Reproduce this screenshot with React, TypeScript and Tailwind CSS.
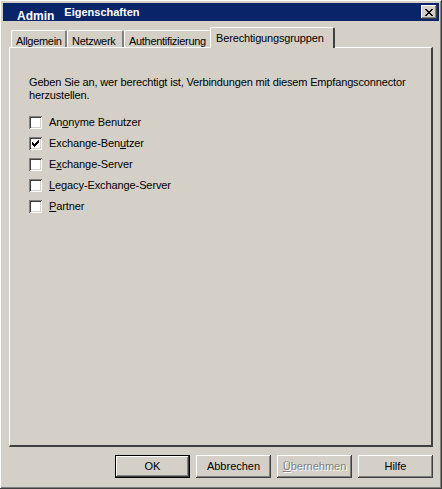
import React from "react";

const font = { fontFamily: '"Liberation Sans", Arial, sans-serif' };

// classic 3D borders
const raised =
  "shadow-[inset_-1px_-1px_#404040,inset_1px_1px_#ffffff,inset_-2px_-2px_#808080,inset_2px_2px_#d4d0c8]";

function Checkbox({ checked, children }: { checked?: boolean; children: React.ReactNode }) {
  return (
    <div className="flex items-center h-[13px] gap-[7px]">
      <div className="w-[13px] h-[13px] bg-white shadow-[inset_1px_1px_#808080,inset_-1px_-1px_#ffffff,inset_2px_2px_#404040,inset_-2px_-2px_#d4d0c8] flex items-center justify-center">
        {checked && (
          <svg width="7" height="7" viewBox="0 0 7 7">
            <path d="M0 2h1v1h1v1h1v-1h1v-1h1v-1h1v-1h1v3h-1v1h-1v1h-1v1h-1v1h-1v-1h-1v-1h-1v-1h-1z" fill="#000" />
          </svg>
        )}
      </div>
      <span className="text-[11px] text-black leading-[13px] tracking-[-0.1px]">{children}</span>
    </div>
  );
}

function Tab({ label, w, active }: { label: string; w: string; active?: boolean }) {
  if (active) {
    return (
      <div
        className={`${w} h-[21px] -mx-[2px] relative z-10 bg-[#d4d0c8] border-l border-t border-white border-r-2 border-r-[#404040] rounded-t-[2px] pl-[5px] pt-[2px] text-[11px] text-black whitespace-nowrap tracking-[-0.15px]`}
      >
        {label}
      </div>
    );
  }
  return (
    <div
      className={`${w} h-[18px] mt-[3px] bg-[#d4d0c8] border-l border-t border-white border-r-2 border-r-[#808080] rounded-t-[2px] pl-[4px] pt-[2px] text-[11px] text-black whitespace-nowrap tracking-[-0.3px]`}
    >
      {label}
    </div>
  );
}

function Button({ children, def, disabled }: { children: React.ReactNode; def?: boolean; disabled?: boolean }) {
  return (
    <div className={`w-[75px] h-[23px] ${def ? "border border-black" : ""}`}>
      <div
        className={`w-full h-full bg-[#d4d0c8] ${raised} flex items-center justify-center text-[11px] ${
          disabled ? "text-[#808080] [text-shadow:1px_1px_#ffffff]" : "text-black"
        }`}
      >
        {children}
      </div>
    </div>
  );
}

export default function App() {
  return (
    <div
      style={font}
      className={`w-[442px] h-[489px] bg-[#d4d0c8] p-[3px] flex flex-col ${raised}`}
    >
      {/* title bar */}
      <div className="h-[18px] bg-[#0a246a] flex items-start pl-[14px] pr-[2px] text-white font-bold">
        <span className="text-[12px] pt-[4px]">Admin</span>
        <span className="text-[11px] ml-[10px] pt-[1px]">Eigenschaften</span>
        <div className="ml-auto mt-[2px] w-[16px] h-[14px] bg-[#d4d0c8] shadow-[inset_-1px_-1px_#404040,inset_1px_1px_#ffffff,inset_-2px_-2px_#808080] flex items-center justify-center">
          <svg width="8" height="7" viewBox="0 0 8 7">
            <path d="M0 0h2v1h1v1h2v-1h1v-1h2v1h-1v1h-1v1h-1v1h1v1h1v1h1v1h-2v-1h-1v-1h-2v1h-1v1h-2v-1h1v-1h1v-1h1v-1h-1v-1h-1v-1h-1z" fill="#000" />
          </svg>
        </div>
      </div>

      {/* tabs */}
      <div className="flex mt-[6px] pl-[8px] h-[21px] items-start">
        <Tab label="Allgemein" w="w-[56px]" />
        <Tab label="Netzwerk" w="w-[57px]" />
        <Tab label="Authentifizierung" w="w-[88px]" />
        <Tab label="Berechtigungsgruppen" w="w-[125px]" active />
      </div>

      {/* panel */}
      <div className="mx-[6px] h-[400px] border-l border-t border-white border-r-2 border-b-2 border-r-[#404040] border-b-[#404040] -mt-[1px] pl-[19px] pt-[28px] text-black">
        <p className="text-[11px] leading-[13px] whitespace-nowrap tracking-[-0.15px]">
          Geben Sie an, wer berechtigt ist, Verbindungen mit diesem Empfangsconnector
          <br />
          herzustellen.
        </p>
        <div className="flex flex-col gap-[8px] mt-[14px]">
          <Checkbox>
            An<span className="underline">o</span>nyme Benutzer
          </Checkbox>
          <Checkbox checked>
            Exchange-Ben<span className="underline">u</span>tzer
          </Checkbox>
          <Checkbox>
            E<span className="underline">x</span>change-Server
          </Checkbox>
          <Checkbox>
            <span className="underline">L</span>egacy-Exchange-Server
          </Checkbox>
          <Checkbox>
            <span className="underline">P</span>artner
          </Checkbox>
        </div>
      </div>

      {/* buttons */}
      <div className="flex justify-end gap-[6px] mt-[8px] pr-[6px]">
        <Button def>OK</Button>
        <Button>Abbrechen</Button>
        <Button disabled>
          <span className="underline">Ü</span>bernehmen
        </Button>
        <Button>Hilfe</Button>
      </div>
    </div>
  );
}
